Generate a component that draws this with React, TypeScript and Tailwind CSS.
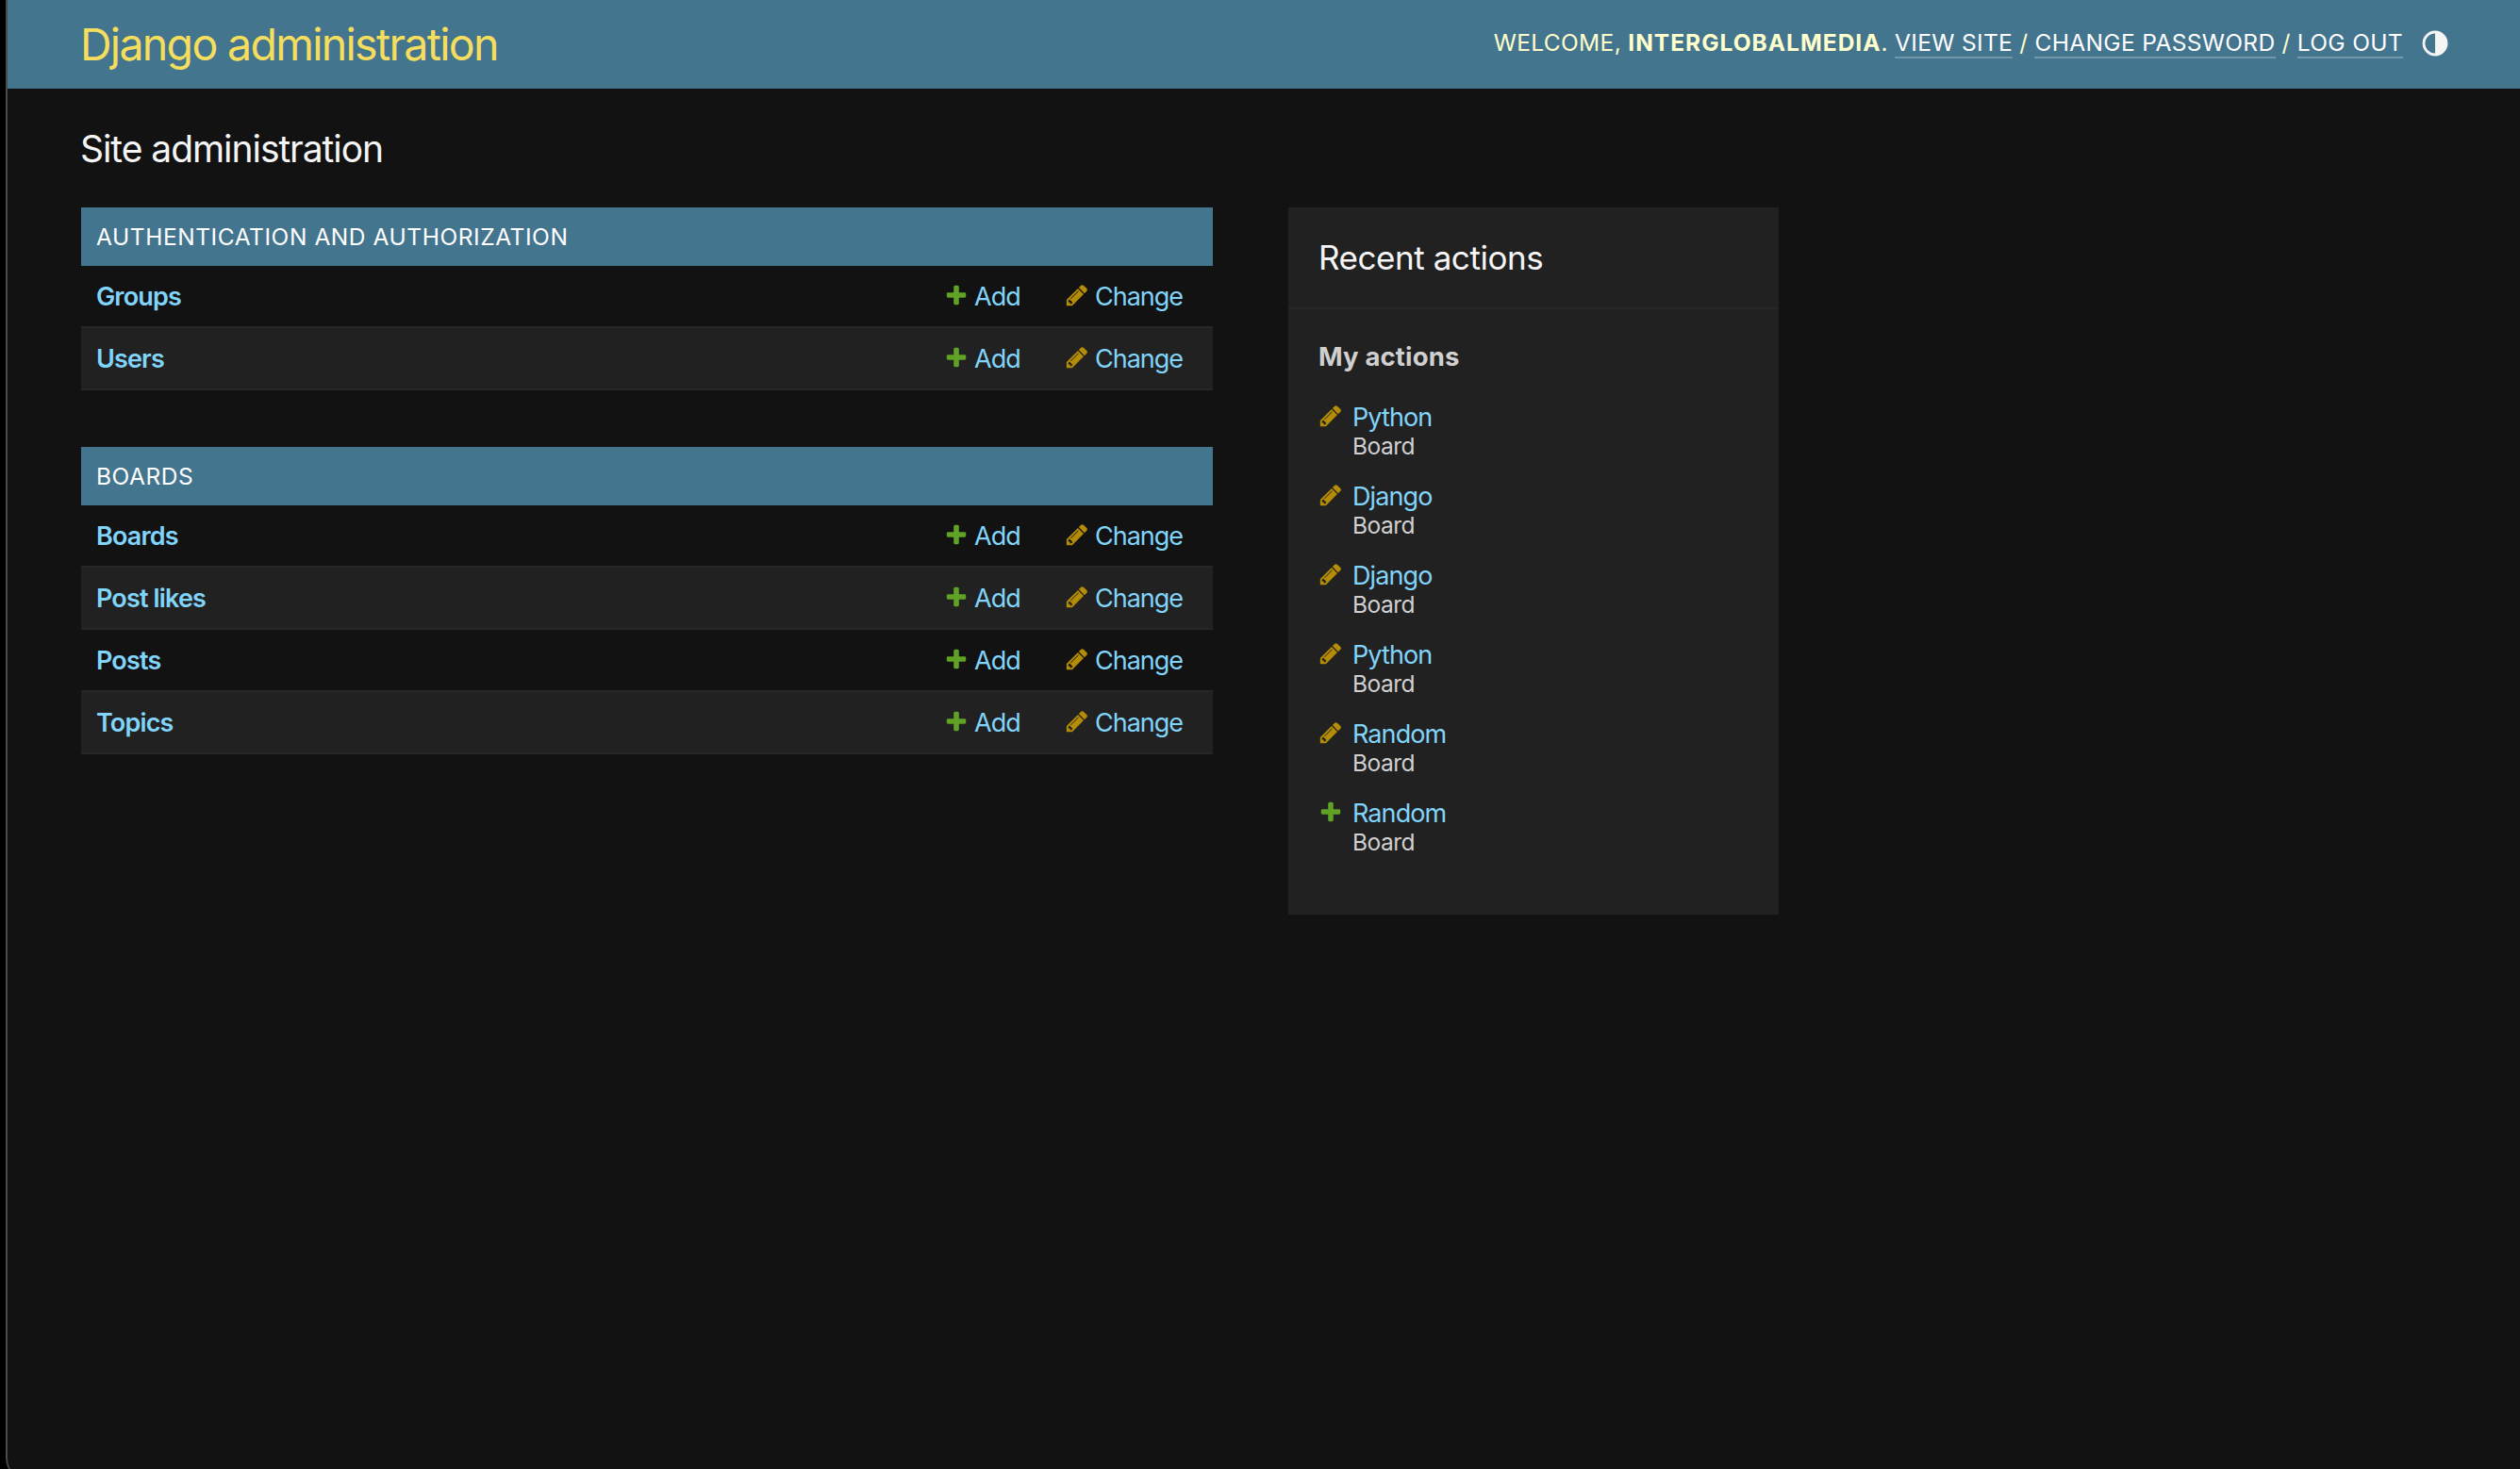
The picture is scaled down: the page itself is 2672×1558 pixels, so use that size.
import React from 'react'

const PlusIcon = () => (
  <svg width="26" height="26" viewBox="0 0 1792 1792" className="shrink-0">
    <path
      fill="#5fa225"
      d="M1600 796v192q0 40-28 68t-68 28h-416v416q0 40-28 68t-68 28h-192q-40 0-68-28t-28-68v-416h-416q-40 0-68-28t-28-68v-192q0-40 28-68t68-28h416v-416q0-40 28-68t68-28h192q40 0 68 28t28 68v416h416q40 0 68 28t28 68z"
    />
  </svg>
)

const PencilIcon = () => (
  <svg width="26" height="26" viewBox="0 0 1792 1792" className="shrink-0">
    <path
      fill="#b48c08"
      d="M491 1536l91-91-235-235-91 91v107h128v128h107zm523-928q0-22-22-22-10 0-17 7l-542 542q-7 7-7 17 0 22 22 22 10 0 17-7l542-542q7-7 7-17zm-54-192l416 416-832 832h-416v-416zm683 96q0 53-37 90l-166 166-416-416 166-165q36-38 90-38 53 0 91 38l235 234q37 39 37 91z"
    />
  </svg>
)

const ThemeIcon = () => (
  <svg width="28" height="28" viewBox="0 0 28 28" className="shrink-0">
    <circle cx="14" cy="14" r="12" fill="none" stroke="#f5f5f5" strokeWidth="2.8" />
    <path fill="#f5f5f5" d="M14 2a12 12 0 0 1 0 24z" />
  </svg>
)

const apps = [
  { name: 'Authentication and Authorization', models: ['Groups', 'Users'] },
  { name: 'Boards', models: ['Boards', 'Post likes', 'Posts', 'Topics'] },
]

const actions = [
  { title: 'Python', type: 'change' },
  { title: 'Django', type: 'change' },
  { title: 'Django', type: 'change' },
  { title: 'Python', type: 'change' },
  { title: 'Random', type: 'change' },
  { title: 'Random', type: 'add' },
]

const Header = () => {
  return (
    <header className="flex h-[94px] items-start justify-between bg-[#44758f] pl-[77px] pr-[76px]">
      <h1 className="pt-[17px] text-[46.5px] leading-[60px] font-normal tracking-[-1.7px] text-[#f5dd5d]">
        Django administration
      </h1>
      <div className="flex items-start pt-[31px]">
        <div className="flex gap-[7px] text-[24.5px] leading-7 font-normal tracking-[0.35px] text-[#ffffcc] uppercase">
          <p>
            Welcome, <strong className="font-bold tracking-[1px]">interglobalmedia</strong>.
          </p>
          <a href="#" className="h-[31px] border-b-2 border-[#7198ab] text-white">View site</a>
          <span>/</span>
          <a href="#" className="h-[31px] border-b-2 border-[#7198ab] text-white">Change password</a>
          <span>/</span>
          <a href="#" className="h-[31px] border-b-2 border-[#7198ab] text-white">Log out</a>
        </div>
        <button className="mt-px ml-5">
          <ThemeIcon />
        </button>
      </div>
    </header>
  )
}

const AppModule = ({ name, models }: { name: string; models: string[] }) => {
  return (
    <section className="mb-[60px] w-[1200px]">
      <h2 className="h-[62px] bg-[#44758f] px-4 text-[24.5px] leading-[62px] font-normal tracking-[0.56px] text-white uppercase">
        {name}
      </h2>
      {models.map((model) => (
        <div
          key={model}
          className="flex h-[66px] items-start border-b-2 border-[#272727] pl-4 pt-[15px] text-[27px] leading-9 tracking-[-1px] text-[#81d4fa] even:bg-[#121212] odd:bg-[#212121]"
        >
          <a href="#" className="w-[899px] font-semibold tracking-[-0.85px]">{model}</a>
          <a href="#" className="flex w-[128px] gap-[6px]">
            <span className="pt-[3px]"><PlusIcon /></span>
            Add
          </a>
          <a href="#" className="flex gap-[6px]">
            <span className="pt-[3px]"><PencilIcon /></span>
            Change
          </a>
        </div>
      ))}
    </section>
  )
}

const RecentActions = () => {
  return (
    <aside className="h-[750px] w-[520px] bg-[#212121]">
      <h2 className="h-[108px] border-b-2 border-[#262626] px-8 pt-[31px] text-[35px] leading-[44px] font-normal tracking-[-0.45px] text-[#f5f5f5]">
        Recent actions
      </h2>
      <h3 className="px-8 pt-[32px] text-[27.5px] leading-9 font-bold tracking-[0.15px] text-[#d0d0d0]">
        My actions
      </h3>
      <ul className="px-8 pt-[29px]">
        {actions.map((action, i) => (
          <li key={i} className="flex h-[84px] gap-[10px]">
            <span className="pt-[3px]">{action.type === 'add' ? <PlusIcon /> : <PencilIcon />}</span>
            <div>
              <a href="#" className="block text-[27px] leading-9 tracking-[-0.9px] text-[#81d4fa]">
                {action.title}
              </a>
              <span className="block text-[24.5px] leading-6 tracking-[-0.5px] text-[#d0d0d0]">Board</span>
            </div>
          </li>
        ))}
      </ul>
    </aside>
  )
}

const App = () => {
  return (
    <div className="h-[1558px] overflow-hidden bg-black pl-[6px] font-['Inter',sans-serif]">
      <div className="h-[1570px] overflow-hidden rounded-bl-[24px] border-l-2 border-[#4a4a4a] bg-[#121212]">
        <Header />
        <main className="pl-[78px]">
          <h1 className="-ml-px pt-[40px] text-[39px] leading-[48px] font-normal tracking-[-1.05px] text-[#f5f5f5]">
            Site administration
          </h1>
          <div className="flex items-start gap-20 pt-[38px]">
            <div>
              {apps.map((app) => (
                <AppModule key={app.name} name={app.name} models={app.models} />
              ))}
            </div>
            <RecentActions />
          </div>
        </main>
      </div>
    </div>
  )
}

export default App
